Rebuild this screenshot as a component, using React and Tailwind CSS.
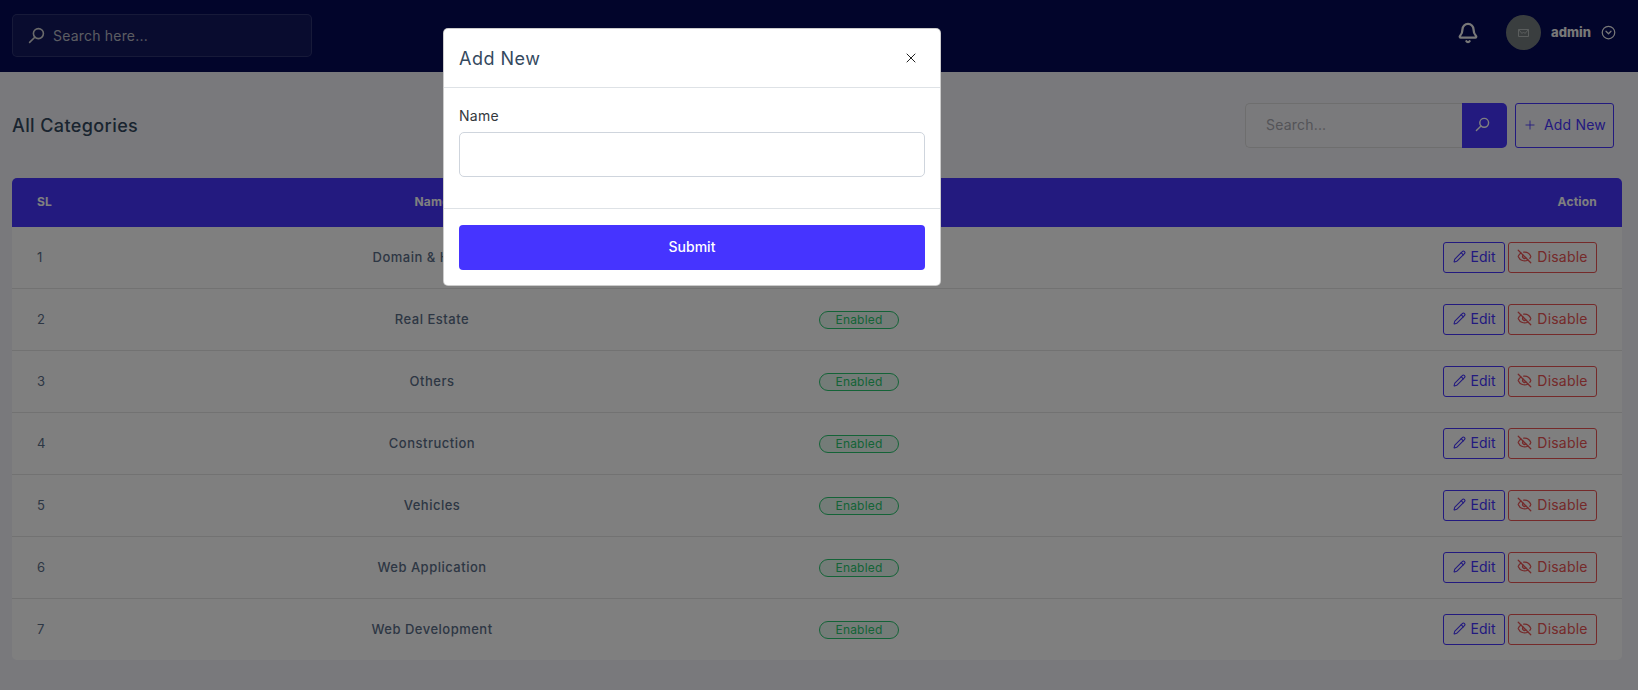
import { Bell, CircleChevronDown, EyeOff, Pencil, Plus, X } from "lucide-react";

const categories = [
  "Domain & Hosting",
  "Real Estate",
  "Others",
  "Construction",
  "Vehicles",
  "Web Application",
  "Web Development",
];

const rowGrid = "grid grid-cols-[88px_664px_190px_1fr] items-center";

// small lens top right, long handle to the bottom left
const SearchIcon = ({ className }) => (
  <svg className={className} viewBox="0 0 16 16" fill="none" stroke="currentColor" strokeWidth="1.5" strokeLinecap="round">
    <circle cx="9.800" cy="6.200" r="4.700" />
    <path d="M6.400 9.600 1.500 14.500" />
  </svg>
);

const Topbar = () => (
  <header className="h-[72px] bg-[#040a56] flex items-center justify-between pl-3 pr-[22px]">
    <div className="w-[300px] h-[43px] mb-[1px] flex items-center pl-[15px] gap-[8px] rounded-[5px] border border-[#ffffff1f] bg-[#ffffff0f]">
      <SearchIcon className="w-[17px] h-[17px] text-[#d5d5d5]" />
      <span className="text-[14px] text-[#b8bac4] tracking-[0.2px]">Search here...</span>
    </div>
    <div className="flex items-center mb-[7px]">
      <Bell className="w-[22px] h-[24px] text-[#f0f0f0] mr-[27px]" strokeWidth={2.5} />
      <div className="w-[35px] h-[35px] rounded-full bg-[#757d7e] flex items-center justify-center">
        <svg width="11" height="8" viewBox="0 0 11 8" fill="none" stroke="#b5bbbb" strokeWidth="1">
          <path d="M.5.5h10v7H.5zM.5.5l3.5 4 1.500-1.500L7 4.500 10.500.5" />
        </svg>
      </div>
      <span className="ml-[10px] text-[13px] font-extrabold text-[#f0f0f0] w-[41px]">admin</span>
      <CircleChevronDown className="ml-[9px] w-[15px] h-[15px] text-[#f0f0f0]" strokeWidth={2} />
    </div>
  </header>
);

const Toolbar = () => (
  <div className="h-[106px] flex items-center justify-between">
    <h2 className="text-[18px] font-medium text-[#34495e] tracking-[0.4px] mt-[1px]">All Categories</h2>
    <div className="flex items-center gap-2 mr-2 mt-[1px]">
      <div className="flex w-[262px] h-[45px]">
        <div className="flex-1 flex items-center pl-5 pb-[2px] bg-[#f5f5f9] border border-[#dcdcdc] border-r-0 rounded-l-[5px] text-[14px] text-[#a8a8b0] tracking-[0.2px]">
          Search...
        </div>
        <button type="button" className="w-[45px] pr-[5px] pb-[2px] bg-[#4634ff] rounded-r-[5px] flex items-center justify-center">
          <SearchIcon className="w-[15px] h-[15px] text-white" />
        </button>
      </div>
      <button type="button" className="w-[99px] h-[45px] pb-[2px] flex items-center justify-center gap-[7px] rounded-[3px] border border-[#4634ff] text-[#4634ff] text-[14px] tracking-[0.2px]">
        <Plus className="w-[14px] h-[14px]" strokeWidth={1.5} />
        Add New
      </button>
    </div>
  </div>
);

const CategoryRow = ({ index, name }) => (
  <div className={`${rowGrid} h-[62px] last:h-[61px] border-b border-[#e5e5e5] last:border-b-0 text-[13px] text-[#5b6e88]`}>
    <span className="pl-[25px]">{index}</span>
    <span className="text-center font-medium tracking-[0.5px]">{name}</span>
    <span className="flex justify-center">
      <span className="w-[80px] h-[18px] flex items-center justify-center rounded-full border border-[#28c76f] bg-[#28c76f1a] text-[12px] tracking-[0.2px] text-[#28c76f]">
        Enabled
      </span>
    </span>
    <div className="flex justify-end gap-[3px] pr-[25px] text-[14px]">
      <button type="button" className="w-[62px] h-[31px] pb-[2px] flex items-center justify-center gap-[5px] rounded-[3px] border border-[#4634ff] text-[#4634ff]">
        <Pencil className="w-[13px] h-[13px]" strokeWidth={2} />
        Edit
      </button>
      <button type="button" className="w-[89px] h-[31px] pb-[2px] flex items-center justify-center gap-[5px] rounded-[3px] border border-[#ea5455] text-[#ea5455] tracking-[0.2px]">
        <EyeOff className="w-[15px] h-[15px]" strokeWidth={2} />
        Disable
      </button>
    </div>
  </div>
);

const AddModal = () => (
  <div className="absolute inset-0 bg-black/50">
    <div className="absolute left-[443px] top-[28px] w-[498px] h-[258px] bg-white rounded-[5px] border border-black/20 flex flex-col">
      <div className="h-[59px] flex items-center justify-between px-[15px] border-b border-[#dee2e6] shrink-0">
        <h5 className="text-[18px] font-normal text-[#34495e] tracking-[0.5px]">Add New</h5>
        <X className="w-[16px] h-[16px] text-[#222] mr-[6px]" strokeWidth={1.5} />
      </div>
      <div className="h-[121px] px-[15px] pt-[18px] border-b border-[#dee2e6] shrink-0">
        <label className="block text-[14px] font-normal text-[#34383d] tracking-[0.3px] leading-[20px] mb-[6px]">Name</label>
        <input type="text" className="w-full h-[45px] rounded-[5px] border border-[#cfd5dd] outline-none" />
      </div>
      <div className="px-[15px] pt-4">
        <button type="button" className="w-full h-[45px] pb-[2px] rounded-[4px] bg-[#4634ff] text-white text-[14px] font-medium">
          Submit
        </button>
      </div>
    </div>
  </div>
);

export default function App() {
  return (
    <div className="relative w-[1638px] h-[690px] overflow-hidden bg-[#f3f3f9] font-['Inter','Liberation_Sans',sans-serif]">
      <Topbar />
      <main className="pl-3 pr-4">
        <Toolbar />
        <div className="bg-white rounded-[5px] overflow-hidden">
          <div className={`${rowGrid} h-[49px] pb-[1px] bg-[#4634ff] text-white text-[12px] font-bold tracking-[0.2px]`}>
            <span className="pl-[25px]">SL</span>
            <span className="text-center">Name</span>
            <span className="text-center">Status</span>
            <span className="text-right pr-[25px]">Action</span>
          </div>
          {categories.map((name, i) => (
            <CategoryRow key={name} index={i + 1} name={name} />
          ))}
        </div>
      </main>
      <AddModal />
    </div>
  );
}
